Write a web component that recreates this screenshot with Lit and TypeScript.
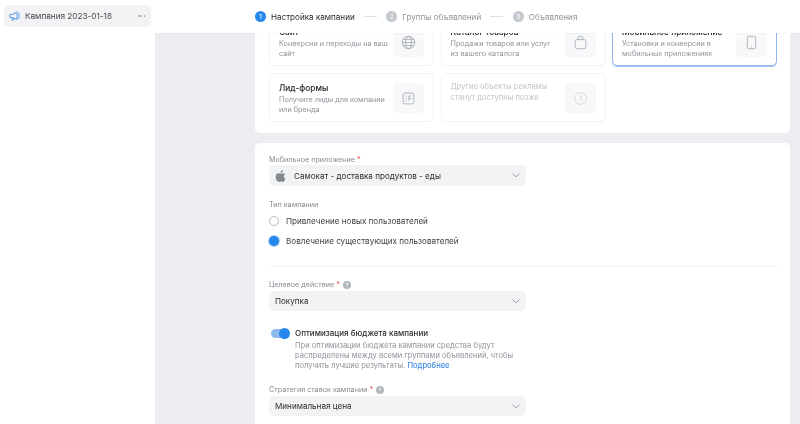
import { LitElement, html, css, svg } from "lit";
import { customElement } from "lit/decorators.js";

const chevron = html`<svg class="chev" width="8" height="5" viewBox="0 0 8 5" fill="none"><path d="M.8 1l3.200 2.800L7.200 1" stroke="#a0a4ab" stroke-width="1" stroke-linecap="round" stroke-linejoin="round"/></svg>`;
const help = html`<svg class="help" width="8" height="8" viewBox="0 0 9 9"><circle cx="4.5" cy="4.5" r="4.5" fill="#b2b6bc"/><path d="M3.2 3.600c0-.8.6-1.300 1.300-1.300s1.300.5 1.300 1.200c0 .9-1.300 1-1.300 1.900" stroke="#fff" stroke-width=".9" fill="none"/><circle cx="4.5" cy="6.800" r=".55" fill="#fff"/></svg>`;

const icons = {
  globe: svg`<circle cx="9" cy="9" r="7.500"/><ellipse cx="9" cy="9" rx="3.400" ry="7.500"/><path d="M1.500 9h15M2.600 5.200h12.800M2.600 12.800h12.800"/>`,
  bag: svg`<rect x="2.500" y="5.500" width="13" height="11" rx="2.500"/><path d="M6 5.500V4.200a3 3 0 0 1 6 0v1.300"/>`,
  phone: svg`<rect x="4" y="1.500" width="10" height="15" rx="2"/><path d="M8.400 14h1.200"/>`,
  form: svg`<rect x="2.500" y="2.500" width="13" height="13" rx="2.500"/><path d="M5.500 6h1.500M5.500 9h1.500M5.500 12h1.500M9.500 6h3M9.500 9h3M9.500 6v6"/>`,
  clock: svg`<circle cx="9" cy="9" r="7"/><path d="M9 5v4.200l2.800 1.800"/>`,
};

@customElement("app-root")
export class AppRoot extends LitElement {
  static styles = css`
    :host {
      display: flex; width: 800px; height: 424px; overflow: hidden;
      font-family: Inter, "Noto Sans", sans-serif; color: #2c2d2e; background: #ebedf0;
      filter: blur(.35px);
    }
    .side { width: 155px; flex: none; background: #fff; padding: 5px 4px 0 4px; box-sizing: border-box; }
    .camp {
      height: 22px; width: 147px; background: #f2f3f5; border-radius: 5px; display: flex; align-items: center;
      padding: 0 6px 0 5px; box-sizing: border-box; font-size: 8.2px; gap: 4px; color: #45474b;
    }
    .camp .name { flex: 1; white-space: nowrap; }
    .dots { display: flex; gap: 1.2px; }
    .dots i { width: 1.4px; height: 1.4px; border-radius: 50%; background: #9a9ea5; display: block; }
    .main { flex: 1; display: flex; flex-direction: column; min-width: 0; }
    .head {
      height: 33px; flex: none; background: #fff; display: flex; align-items: center; padding-left: 100px;
      font-size: 8.1px; color: #8f949c; position: relative; z-index: 1; box-shadow: 0 1px 1px rgba(0,0,0,.02);
    }
    .step { display: flex; align-items: center; gap: 5px; white-space: nowrap; }
    .step.on { color: #2c2d2e; }
    .num { width: 11px; height: 11px; border-radius: 50%; background: #c4c8cf; color: #fff; font-size: 6.5px; display: flex; align-items: center; justify-content: center; }
    .on .num { background: #2688eb; }
    .line { width: 13px; height: 1px; background: #dcdfe3; margin: 0 9.5px 0 9px; }
    .scroll { flex: 1; overflow: hidden; padding: 0 10px 0 100px; }
    .card { background: #fff; border-radius: 5px; }
    .c1 { margin-top: -22px; height: 122px; padding: 6px 14px 0; box-sizing: border-box; display: grid; grid-template-columns: 165px 165px 165px; column-gap: 6.5px; row-gap: 7px; grid-auto-rows: 49px; align-content: start; }
    .obj { border: 1px solid #f0f2f4; border-radius: 5px; box-sizing: border-box; padding: 7px 9px 0 9px; display: flex; justify-content: space-between; }
    .obj.sel { border-color: #8fb6ee; box-shadow: 0 1px 0 #a5c5f2; }
    .obj .t { font-size: 8.3px; font-weight: 500; color: #1c1d1f; line-height: 12px; margin-top: 1px; white-space: nowrap; }
    .obj .d { font-size: 7.25px; line-height: 9.3px; color: #8f949c; margin-top: 1.3px; white-space: nowrap; }
    .obj.later .d { color: #c1c5cb; margin-top: 0; line-height: 11px; font-size: 7.6px; }
    .ico { width: 31px; height: 30px; border-radius: 4px; background: #f7f8f9; display: flex; align-items: center; justify-content: center; flex: none; margin-top: 2px; }
    .ico svg { fill: none; stroke: #a4a8af; stroke-width: 1; width: 15px; height: 15px; }
    .later .ico svg { stroke: #d2d5da; }
    .c2 { margin-top: 10px; height: 300px; padding: 11px 14px 0; box-sizing: border-box; }
    .lbl { font-size: 7.2px; line-height: 12px; color: #858a92; display: flex; align-items: center; gap: 3px; white-space: nowrap; }
    .lbl b { color: #e64646; font-weight: 400; margin-left: -1px; }
    .sel-box { width: 257px; height: 20px; background: #f2f3f5; border-radius: 5px; display: flex; align-items: center; padding: 0 6px; box-sizing: border-box; font-size: 8.1px; color: #2c2d2e; justify-content: space-between; }
    .sel-box.first { margin-top: -1px; height: 21px; }
    .sel-box .l { display: flex; align-items: center; gap: 8px; }
    .sec { margin-top: 13px; }
    .radio { display: flex; align-items: center; gap: 7px; font-size: 8.1px; color: #3c3e41; height: 20px; }
    .radio .o { width: 10px; height: 10px; box-sizing: border-box; border-radius: 50%; border: 1px solid #b8bcc3; flex: none; }
    .radio .o.on { border: 0; background: #2688eb; box-shadow: 0 0 0 1px #a9cdf5; }
    hr { border: 0; border-top: 1px solid #eff1f3; margin: 15px 0 0; width: 508px; }
    .tact { margin-top: 12px; }
    .strat { margin-top: 13px; }
    .tg { display: flex; gap: 6px; margin-top: 16px; width: 257px; padding-left: 2px; box-sizing: border-box; }
    .sw { width: 18px; height: 9px; border-radius: 5px; background: #8db9f0; position: relative; flex: none; margin-top: 1.500px; }
    .sw::after { content: ""; position: absolute; right: -1px; top: -1px; width: 11px; height: 11px; border-radius: 50%; background: #2688eb; }
    .tg .t { font-size: 8px; font-weight: 500; color: #2c2d2e; line-height: 12px; white-space: nowrap; }
    .tg .d { font-size: 7.55px; line-height: 10px; color: #8f949c; white-space: nowrap; margin-top: 2px; }
    .tg a { color: #3f8ae0; font-weight: 500; text-decoration: none; }
  `;
  obj(t: string, d: string[], i: keyof typeof icons, cls = "") {
    return html`<div class="obj ${cls}"><div>${t ? html`<div class="t">${t}</div>` : ""}<div class="d">${d.map((x) => html`${x}<br />`)}</div></div>
      <div class="ico"><svg viewBox="0 0 18 18">${icons[i]}</svg></div></div>`;
  }
  render() {
    return html`
      <div class="side"><div class="camp">
        <svg width="12" height="12" viewBox="0 0 12 12" fill="none" stroke="#6ba5ea" stroke-width="1.100"><path d="M1 4.500h2.500L8 2v7.500L3.500 7.500H1z" stroke-linejoin="round"/><path d="M3 7.700V10h1.600V8.200M10 3v5.500" stroke-linecap="round"/></svg>
        <span class="name">Кампания 2023-01-18</span>
        <span class="dots"><i></i><i></i><i></i></span>
      </div></div>
      <div class="main">
        <div class="head">
          <div class="step on"><span class="num">1</span>Настройка кампании</div><span class="line"></span>
          <div class="step"><span class="num">2</span>Группы объявлений</div><span class="line"></span>
          <div class="step"><span class="num">3</span>Объявления</div>
        </div>
        <div class="scroll">
          <div class="card c1">
            ${this.obj("Сайт", ["Конверсии и переходы на ваш", "сайт"], "globe")}
            ${this.obj("Каталог товаров", ["Продажи товаров или услуг", "из вашего каталога"], "bag")}
            ${this.obj("Мобильное приложение", ["Установки и конверсии в", "мобильных приложениях"], "phone", "sel")}
            ${this.obj("Лид-формы", ["Получите лиды для компании", "или бренда"], "form")}
            ${this.obj("", ["Другие объекты рекламы", "станут доступны позже"], "clock", "later")}
          </div>
          <div class="card c2">
            <div class="lbl">Мобильное приложение <b>*</b></div>
            <div class="sel-box first"><span class="l">
              <svg width="11" height="12" viewBox="0 0 12 14" fill="#84888f"><path d="M9.900 7.400c0-1.600 1.300-2.300 1.400-2.400-.8-1.100-2-1.300-2.400-1.300-1-.1-2 .6-2.500.6s-1.300-.6-2.200-.6C2.600 3.700 1.500 4.400.9 5.400-.3 7.500.6 10.600 1.800 12.300c.6.800 1.300 1.700 2.200 1.700.9 0 1.200-.6 2.300-.6s1.400.6 2.300.6 1.500-.8 2.100-1.700c.7-1 .9-1.900 1-2-.1 0-1.800-.7-1.800-2.900zM8.200 2.400C8.700 1.800 9 1 8.900.2c-.7 0-1.600.5-2.100 1.100-.5.5-.9 1.300-.8 2.100.8.100 1.600-.4 2.200-1z"/></svg>
              Самокат - доставка продуктов - еды</span>${chevron}</div>
            <div class="sec lbl">Тип кампании</div>
            <div>
              <div class="radio"><span class="o"></span>Привлечение новых пользователей</div>
              <div class="radio"><span class="o on"></span>Вовлечение существующих пользователей</div>
            </div>
            <hr />
            <div class="lbl tact">Целевое действие <b>*</b> ${help}</div>
            <div class="sel-box"><span class="l">Покупка</span>${chevron}</div>
            <div class="tg"><span class="sw"></span><div>
              <div class="t">Оптимизация бюджета кампании</div>
              <div class="d">При оптимизации бюджета кампании средства будут<br />распределены между всеми группами объявлений, чтобы<br />получить лучшие результаты. <a>Подробнее</a></div>
            </div></div>
            <div class="lbl strat">Стратегия ставок кампании <b>*</b> ${help}</div>
            <div class="sel-box"><span class="l">Минимальная цена</span>${chevron}</div>
          </div>
        </div>
      </div>`;
  }
}
